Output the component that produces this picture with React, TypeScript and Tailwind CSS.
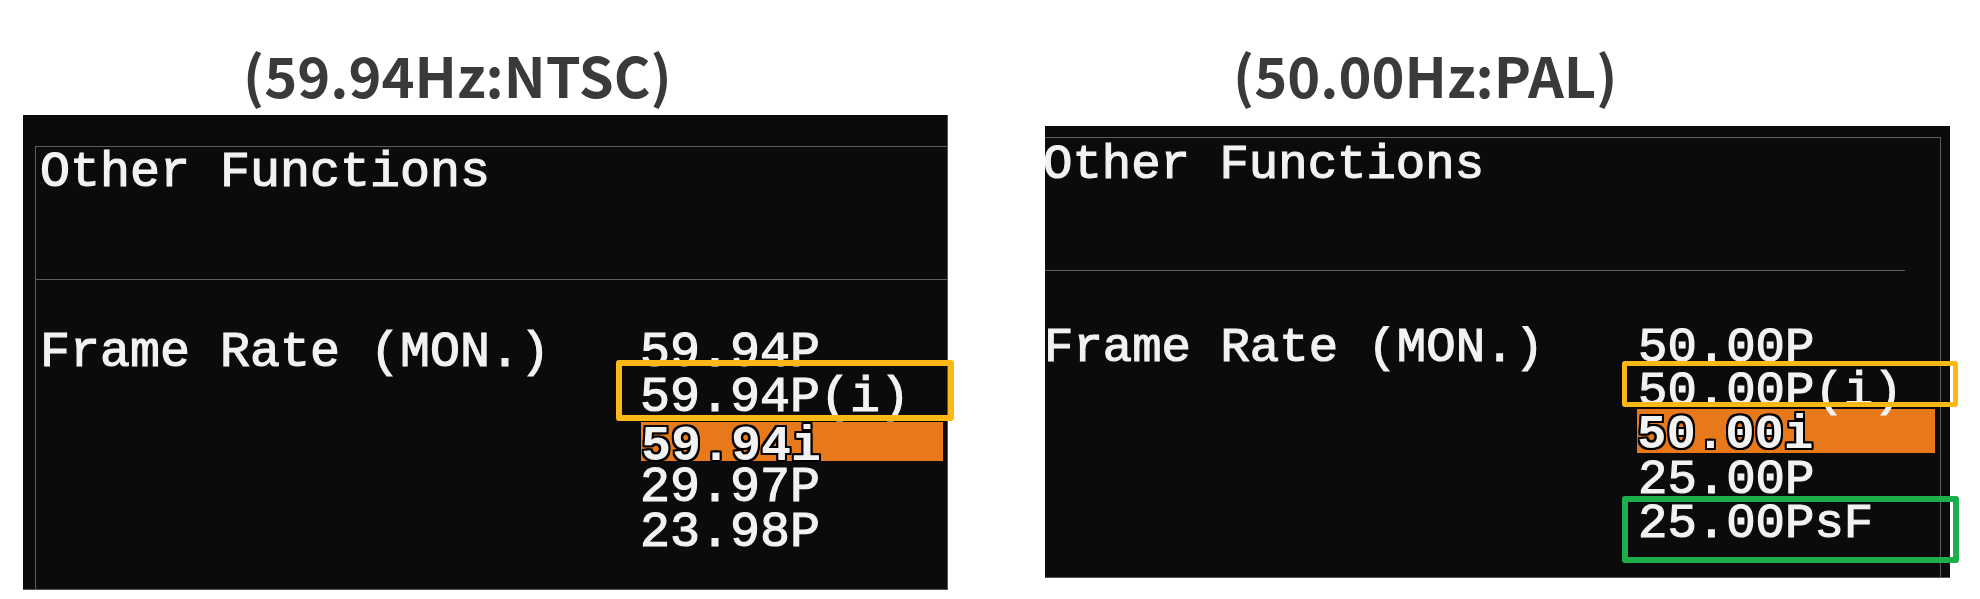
import React from "react";

const osd = "font-['Liberation_Mono','DejaVu_Sans_Mono',monospace] [-webkit-text-stroke:1.2px_#f2f2f2]";
const title = "font-['Noto_Sans_CJK_JP','Noto_Sans',sans-serif] font-bold text-[56px] leading-[56px] text-[#3a3a3a] whitespace-pre";
const outline = "[-webkit-text-stroke:0px] [text-shadow:-2px_0_#000,2px_0_#000,0_-2px_#000,0_2px_#000,-2px_-2px_#000,2px_2px_#000,-2px_2px_#000,2px_-2px_#000]";

function LeftPanel() {
  return (
    <div className="flex flex-col">
      <div className="h-[115px] pt-[46px] pl-[220px]">
        <div className={title}>(59.94Hz:NTSC)</div>
      </div>
      <div className="w-[925px] h-[475px] bg-[#0b0b0b] pt-[31px] pl-[12px] flex border-r border-b border-[#555]">
        <div className={`flex-1 border-l border-t border-[#5c5c5c] flex flex-col text-[50px] leading-[45px] text-[#f2f2f2] whitespace-pre ${osd}`}>
          <div className="h-[132px] pl-[4px] pt-[3px]">Other Functions</div>
          <div className="border-t border-[#5c5c5c]" />
          <div className="flex pt-[50px] pl-[4px]">
            <div className="w-[600px]">Frame Rate (MON.)</div>
            <div className="flex flex-col">
              <div className="h-[45px]">59.94P</div>
              <div className="h-[45px] relative">
                59.94P(i)
                <div className="absolute left-[-24px] top-[-15px] w-[338px] h-[61px] border-[6px] border-[#fbb817] rounded-[3px]" />
              </div>
              <div className="h-[45px] pt-[2px]">
                <div className={`ml-[1px] w-[302px] h-[39px] bg-[#e8791b] pt-[2px] font-bold ${outline}`}>59.94i</div>
              </div>
              <div className="h-[45px]">29.97P</div>
              <div className="h-[45px]">23.98P</div>
            </div>
          </div>
        </div>
      </div>
    </div>
  );
}

function RightPanel() {
  return (
    <div className="flex flex-col ml-[97px]">
      <div className="h-[126px] pt-[46px] pl-[188px]">
        <div className={title}>(50.00Hz:PAL)</div>
      </div>
      <div className="w-[905px] h-[452px] bg-[#0b0b0b] pt-[11px] flex border-b border-[#555]">
        <div className={`flex-1 mr-[9px] border-t border-r border-[#5c5c5c] flex flex-col text-[49px] leading-[44px] text-[#f2f2f2] whitespace-pre ${osd}`}>
          <div className="h-[132px] pt-[5px] overflow-hidden">
            <div className="-ml-[2px]">Other Functions</div>
          </div>
          <div className="w-[860px] border-t border-[#5c5c5c]" />
          <div className="flex pt-[55px]">
            <div className="w-[593px] overflow-hidden">
              <div className="-ml-[1px]">Frame Rate (MON.)</div>
            </div>
            <div className="flex flex-col">
              <div className="h-[44px]">50.00P</div>
              <div className="h-[44px] relative">
                50.00P(i)
                <div className="absolute left-[-16px] top-[-9px] w-[336px] h-[46px] border-[5px] border-[#fbb817] rounded-[3px]" />
              </div>
              <div className="h-[44px] -mt-[5px] mb-[5px]">
                <div className={`-ml-[1px] w-[298px] h-[44px] bg-[#e8791b] pt-[4px] font-bold ${outline}`}>50.00i</div>
              </div>
              <div className="h-[44px]">25.00P</div>
              <div className="h-[44px] relative">
                25.00PsF
                <div className="absolute left-[-16px] top-[-6px] w-[337px] h-[67px] border-[6px] border-[#1daf4b] rounded-[3px]" />
              </div>
            </div>
          </div>
        </div>
      </div>
    </div>
  );
}

export default function App() {
  return (
    <div className="w-[1980px] h-[599px] bg-white overflow-hidden flex pl-[23px]">
      <LeftPanel />
      <RightPanel />
    </div>
  );
}
